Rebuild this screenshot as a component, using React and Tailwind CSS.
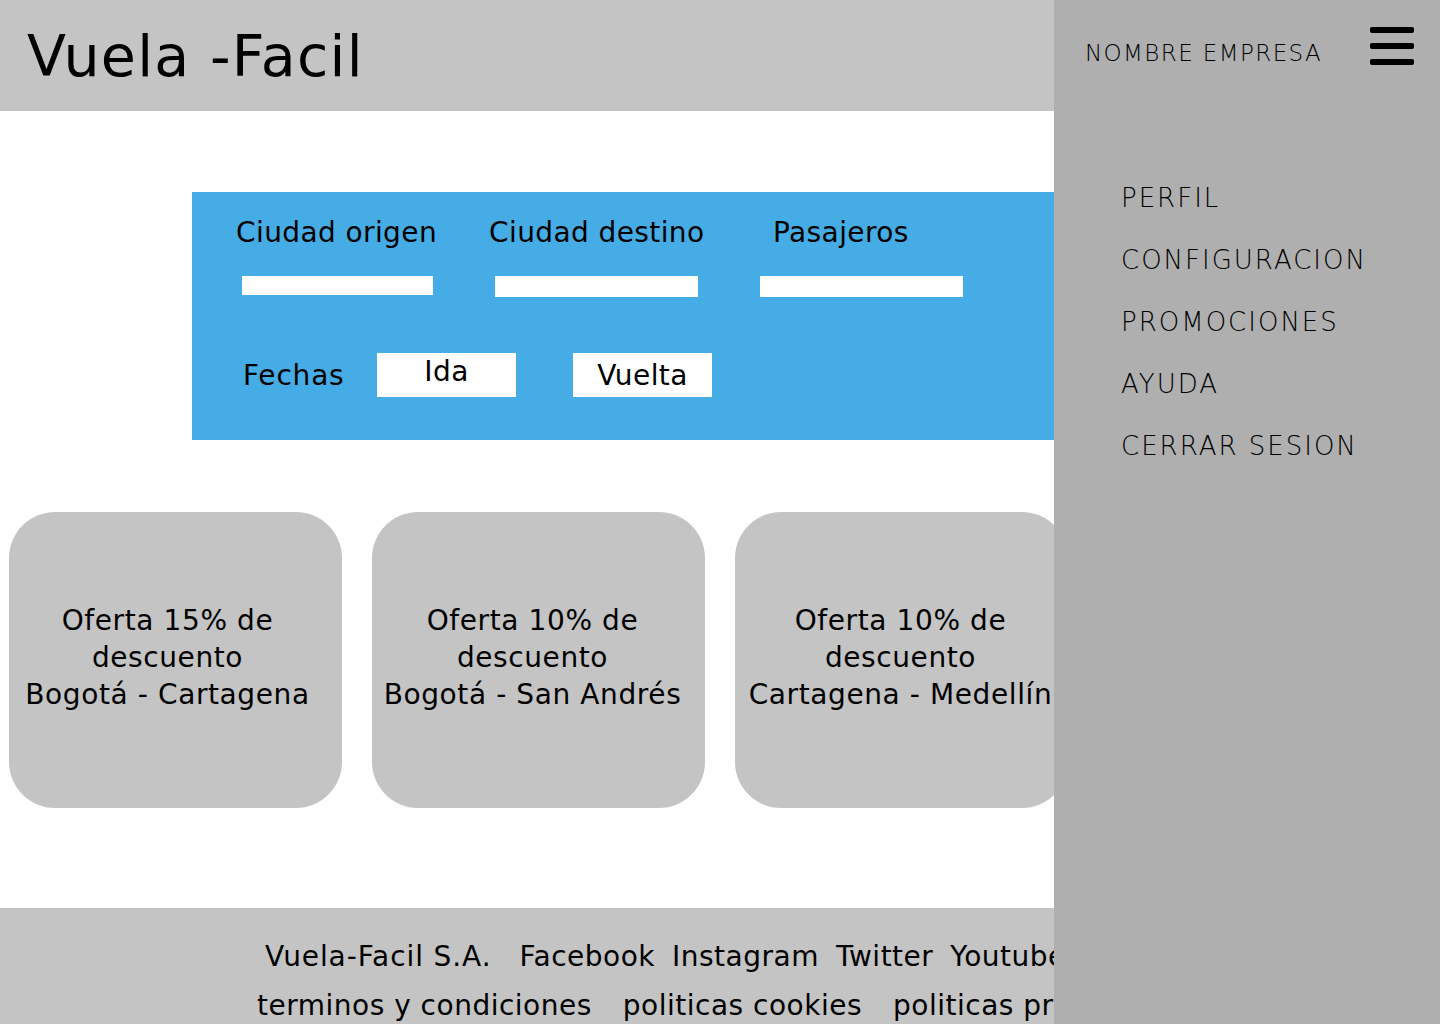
import React from "react";

const F = { fontFamily: '"DejaVu Sans", "Open Sans", sans-serif' };

function Card({ lines, shift }) {
  return (
    <div className={`w-[333px] h-[296px] shrink-0 rounded-[46px] bg-[#c4c4c4] flex flex-col items-center justify-center pb-[6px] ${shift}`}>
      {lines.map((l, i) => (
        <div key={i} className="text-[28px] leading-[37px] tracking-[0.6px] text-black whitespace-nowrap">{l}</div>
      ))}
    </div>
  );
}

export default function App() {
  return (
    <div className="relative w-[1440px] h-[1024px] overflow-hidden bg-white" style={F}>
      {/* header */}
      <header className="h-[111px] bg-[#c4c4c4] flex items-center pl-[27px]">
        <h1 className="text-[57px] leading-none font-medium text-black tracking-[1.3px] pt-[2px]">Vuela -Facil</h1>
      </header>

      {/* search panel */}
      <section className="mt-[81px] ml-[192px] w-[880px] h-[248px] bg-[#45ace5] text-black text-[28px] leading-[36px] tracking-[0.4px]">
        <div className="flex pt-[23px] h-[84px]">
          <div className="ml-[44px] w-[253px] whitespace-nowrap">Ciudad origen</div>
          <div className="w-[284px] whitespace-nowrap">Ciudad destino</div>
          <div className="whitespace-nowrap">Pasajeros</div>
        </div>
        <div className="flex items-start">
          <div className="ml-[50px] w-[191px] h-[19px] bg-white" />
          <div className="ml-[62px] w-[203px] h-[21px] bg-white" />
          <div className="ml-[62px] w-[203px] h-[21px] bg-white" />
        </div>
        <div className="flex items-center mt-[56px]">
          <div className="ml-[51px] w-[134px] pt-[2px] tracking-[0.8px]">Fechas</div>
          <div className="w-[139px] h-[44px] bg-white flex justify-center items-start pt-[1px]">Ida</div>
          <div className="ml-[57px] w-[139px] h-[44px] bg-white flex justify-center items-center pt-[2px]">Vuelta</div>
        </div>
      </section>

      {/* offer cards */}
      <div className="flex gap-[30px] mt-[72px] pl-[9px]">
        <Card shift="pr-[16px]" lines={["Oferta 15% de", "descuento", "Bogotá - Cartagena"]} />
        <Card shift="pr-[12px]" lines={["Oferta 10% de", "descuento", "Bogotá - San Andrés"]} />
        <Card shift="pr-[2px]" lines={["Oferta 10% de", "descuento", "Cartagena - Medellín"]} />
      </div>

      {/* footer */}
      <footer className="mt-[100px] h-[116px] bg-[#c4c4c4] text-black text-[28px] leading-[36px] tracking-[0.5px] whitespace-nowrap">
        <div className="flex pt-[31px] pl-[265px]">
          <span className="tracking-[0.9px]">Vuela-Facil S.A.</span>
          <span className="ml-[28px]">Facebook</span>
          <span className="ml-[17px]">Instagram</span>
          <span className="ml-[17px]">Twitter</span>
          <span className="ml-[17px]">Youtube</span>
        </div>
        <div className="flex pt-[13px] pl-[257px]">
          <span>terminos y condiciones</span>
          <span className="ml-[31px]">politicas cookies</span>
          <span className="ml-[31px]">politicas privacidad</span>
        </div>
      </footer>

      {/* side menu overlay */}
      <aside className="absolute top-0 right-0 w-[386px] h-[1024px] bg-[#afafaf] text-black">
        <div className="flex items-center h-[106px] pl-[31px]">
          <span className="text-[23px] font-extralight tracking-[1.4px] whitespace-nowrap">NOMBRE EMPRESA</span>
          <div className="ml-auto mr-[26px] flex flex-col gap-[10px] -mt-[14px]">
            <div className="w-[44px] h-[6px] rounded-[2px] bg-black" />
            <div className="w-[44px] h-[6px] rounded-[2px] bg-black" />
            <div className="w-[44px] h-[6px] rounded-[2px] bg-black" />
          </div>
        </div>
        <nav className="flex flex-col gap-[26px] pl-[67px] pt-[74px] text-[26px] leading-[36px] font-extralight tracking-[2px] whitespace-nowrap">
          <span>PERFIL</span>
          <span>CONFIGURACION</span>
          <span>PROMOCIONES</span>
          <span>AYUDA</span>
          <span>CERRAR SESION</span>
        </nav>
      </aside>
    </div>
  );
}
